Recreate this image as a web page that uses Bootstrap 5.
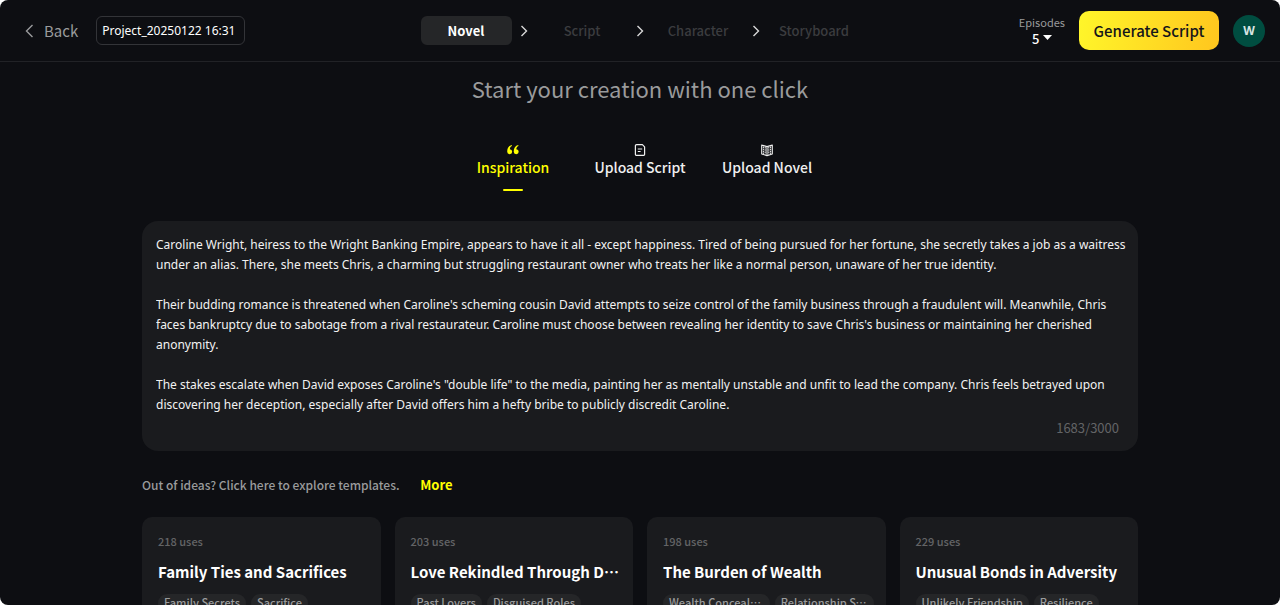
<!DOCTYPE html>
<html lang="en">
<head>
<meta charset="utf-8">
<meta name="viewport" content="width=device-width, initial-scale=1">
<title>Novel – Project_20250122 16:31</title>
<link href="https://cdn.jsdelivr.net/npm/bootstrap@5.3.0/dist/css/bootstrap.min.css" rel="stylesheet">
<style>
  html { background: #fff; }
  body { background: transparent; font-family: "Noto Sans CJK SC", sans-serif; font-size: 13px; line-height: 20px; font-weight: 500; }
  .app-shell { background: #0d0e12; color: #fff; border-radius: 8px; }
  .app-header { display: grid; grid-template-columns: 1fr auto 1fr; height: 62px; border-bottom: 1px solid #212226; padding: 0 15px; }
  .back-link { color: #9a9b9c; font-size: 15px; font-weight: 400; }
  .project-name { width: 149px; height: 29px; margin-left: 18px; padding: 0 5px; color: #fff; background: transparent; border: 1px solid #333438; border-radius: 6px; font: 400 12px/20px "Noto Sans", sans-serif; }
  .step-btn { width: 91px; height: 29px; padding: 0; border: 0; border-radius: 6px; background: transparent; color: #3b3c3f; font-size: 13px; line-height: 20px; font-weight: 500; }
  .step-btn.current { background: #252628; color: #fff; font-weight: 700; }
  .step-arrow { width: 25px; }
  .episodes-label { color: #9a9b9c; font-size: 11px; line-height: 16px; font-weight: 400; }
  .episodes-select { appearance: none; width: 20px; height: 18px; padding: 0; border: 0; background: transparent url("data:image/svg+xml,%3Csvg xmlns='http://www.w3.org/2000/svg' width='9' height='5'%3E%3Cpath d='M0 0h9L4.5 5z' fill='white'/%3E%3C/svg%3E") no-repeat right 5px; color: #fff; font-size: 13px; line-height: 18px; font-weight: 500; }
  .generate-btn { width: 140px; height: 39px; padding: 0; border: 0; border-radius: 10px; background: linear-gradient(100deg, #fff62a, #ffc61e); color: #15161a; font-size: 15px; line-height: 24px; font-weight: 500; }
  .avatar { width: 32px; height: 32px; border: 0; padding: 0; border-radius: 50%; background: #004d40; color: #d9e5e3; font: 700 12px/20px "Open Sans", sans-serif; }
  .header-end { gap: 14px; }
  .page-title { color: #9a9b9c; font-size: 22px; line-height: 32px; font-weight: 400; margin: 10px 0 39px; }
  .source-tab { width: 127px; padding: 0 0 12px; border: 0; background: transparent; color: #f0f0f0; font-size: 14px; line-height: 20px; font-weight: 500; }
  .source-tab::after { content: ""; width: 20px; height: 2px; margin-top: 12px; border-radius: 1px; }
  .source-tab.active { color: #ffff00; }
  .source-tab.active::after { background: #ffff00; }
  .content-col { max-width: 996px; }
  .panel { background: #1a1b1e; border-radius: 16px; padding: 14px 10px 13px 14px; margin-top: 18px; }
  .story-input { height: 180px; padding: 0; border: 0; background: transparent; color: #f2f2f2; font: 400 12px/20px "Noto Sans", sans-serif; resize: none; overflow: hidden; }
  .counter { color: #636466; font-weight: 400; padding: 3px 9px 0 0; }
  .hint { color: #9a9b9c; font-size: 12px; margin: 24px 0 22px; }
  .more-link { color: #ffff00; font-size: 13px; font-weight: 700; margin-left: 18px; }
  .template-grid { display: grid; grid-template-columns: repeat(4, minmax(0, 1fr)); gap: 14px; }
  .template-card { background: #1a1b1e; border-radius: 10px; padding: 14px 12px 14px 16px; height: 160px; }
  .uses { color: #636466; font-size: 11px; }
  .template-title { font-size: 15px; line-height: 24px; font-weight: 700; margin: 9px 0 10px; }
  .tags { gap: 5px; }
  .tag { background: #252628; color: #9a9b9c; font-size: 11px; line-height: 16px; border-radius: 9px; padding: 0 6px 2px; }
</style>
</head>
<body>
<div class="app-shell vh-100 overflow-hidden">
  <header class="app-header align-items-center">
    <div class="d-flex align-items-center">
      <a href="#" class="back-link d-flex align-items-center text-decoration-none ms-2">
        <svg class="me-2" width="13" height="14" viewBox="0 0 13 14" fill="none" stroke="currentColor" stroke-width="1.4" aria-hidden="true"><path d="M9.500 1 3.500 7l6 6"/></svg>Back</a>
      <input class="project-name" type="text" aria-label="Project name" value="Project_20250122 16:31">
    </div>
    <nav class="d-flex align-items-center" aria-label="Steps">
      <button class="step-btn current" type="button">Novel</button>
      <svg class="step-arrow" height="12" viewBox="0 0 25 12" fill="none" stroke="#d8d8d8" stroke-width="1.4" aria-hidden="true"><path d="m9.500 1 5 5-5 5"/></svg>
      <button class="step-btn" type="button">Script</button>
      <svg class="step-arrow" height="12" viewBox="0 0 25 12" fill="none" stroke="#d8d8d8" stroke-width="1.4" aria-hidden="true"><path d="m9.500 1 5 5-5 5"/></svg>
      <button class="step-btn" type="button">Character</button>
      <svg class="step-arrow" height="12" viewBox="0 0 25 12" fill="none" stroke="#d8d8d8" stroke-width="1.4" aria-hidden="true"><path d="m9.500 1 5 5-5 5"/></svg>
      <button class="step-btn" type="button">Storyboard</button>
    </nav>
    <div class="header-end d-flex align-items-center justify-content-end">
      <div class="d-flex flex-column align-items-center">
        <label class="episodes-label" for="episodes">Episodes</label>
        <select class="episodes-select" id="episodes"><option>5</option></select>
      </div>
      <button class="generate-btn" type="button">Generate Script</button>
      <button class="avatar" type="button" aria-label="Account">W</button>
    </div>
  </header>

  <main class="content-col mx-auto">
    <h1 class="page-title text-center">Start your creation with one click</h1>
    <div class="d-flex justify-content-center">
      <button class="source-tab active d-flex flex-column align-items-center" type="button">
        <svg width="14" height="14" viewBox="0 0 14 14" fill="currentColor" aria-hidden="true"><path d="M5.800 2C2.800 2.600 1.200 5 1.200 8.700a2.500 2.500 0 1 0 2.600-2.500C3.900 4.700 4.500 3.600 5.900 3zM12.300 2C9.300 2.600 7.700 5 7.700 8.700a2.500 2.500 0 1 0 2.600-2.500c.1-1.500.7-2.600 2.100-3.200z"/></svg>Inspiration</button>
      <button class="source-tab d-flex flex-column align-items-center" type="button">
        <svg width="14" height="14" viewBox="0 0 14 14" fill="none" stroke="currentColor" stroke-width="1.200" stroke-linejoin="round" aria-hidden="true"><path d="M3.600 1.600h5.800l2.200 2.200v7.400a1.200 1.200 0 0 1-1.200 1.200H3.600a1.200 1.200 0 0 1-1.200-1.200V2.800a1.200 1.200 0 0 1 1.200-1.200zM4.800 6h4.400M4.800 8.500h2.800"/></svg>Upload Script</button>
      <button class="source-tab d-flex flex-column align-items-center" type="button">
        <svg width="14" height="14" viewBox="0 0 14 14" fill="none" stroke="currentColor" stroke-width="1.100" stroke-linejoin="round" aria-hidden="true"><path d="M1.700 2.100 7 3.600l5.300-1.500v8.800L7 12.700l-5.300-1.800zM7 3.600v9"/><path d="M3.400 3.500v7.500M5.200 4v7.600M8.800 4v7.600M10.600 3.500v7.500" stroke-width="1" stroke-dasharray="1.600 .6"/></svg>Upload Novel</button>
    </div>

    <section class="panel">
      <textarea class="story-input d-block w-100" aria-label="Story idea" spellcheck="false">Caroline Wright, heiress to the Wright Banking Empire, appears to have it all - except happiness. Tired of being pursued for her fortune, she secretly takes a job as a waitress under an alias. There, she meets Chris, a charming but struggling restaurant owner who treats her like a normal person, unaware of her true identity.

Their budding romance is threatened when Caroline's scheming cousin David attempts to seize control of the family business through a fraudulent will. Meanwhile, Chris faces bankruptcy due to sabotage from a rival restaurateur. Caroline must choose between revealing her identity to save Chris's business or maintaining her cherished anonymity.

The stakes escalate when David exposes Caroline's "double life" to the media, painting her as mentally unstable and unfit to lead the company. Chris feels betrayed upon discovering her deception, especially after David offers him a hefty bribe to publicly discredit Caroline.</textarea>
      <div class="counter text-end">1683/3000</div>
    </section>

    <div class="hint">Out of ideas? Click here to explore templates. <a href="#" class="more-link text-decoration-none">More</a></div>

    <div class="template-grid">
      <article class="template-card">
        <div class="uses">218 uses</div>
        <h2 class="template-title text-truncate">Family Ties and Sacrifices</h2>
        <div class="tags d-flex"><span class="tag text-truncate">Family Secrets</span><span class="tag text-truncate">Sacrifice</span></div>
      </article>
      <article class="template-card">
        <div class="uses">203 uses</div>
        <h2 class="template-title text-truncate">Love Rekindled Through Distance</h2>
        <div class="tags d-flex"><span class="tag text-truncate">Past Lovers</span><span class="tag text-truncate">Disguised Roles</span></div>
      </article>
      <article class="template-card">
        <div class="uses">198 uses</div>
        <h2 class="template-title text-truncate">The Burden of Wealth</h2>
        <div class="tags d-flex"><span class="tag text-truncate">Wealth Concealment</span><span class="tag text-truncate">Relationship Strain</span></div>
      </article>
      <article class="template-card">
        <div class="uses">229 uses</div>
        <h2 class="template-title text-truncate">Unusual Bonds in Adversity</h2>
        <div class="tags d-flex"><span class="tag text-truncate">Unlikely Friendship</span><span class="tag text-truncate">Resilience</span></div>
      </article>
    </div>
  </main>
</div>
<script src="https://cdn.jsdelivr.net/npm/bootstrap@5.3.0/dist/js/bootstrap.bundle.min.js"></script>
</body>
</html>
